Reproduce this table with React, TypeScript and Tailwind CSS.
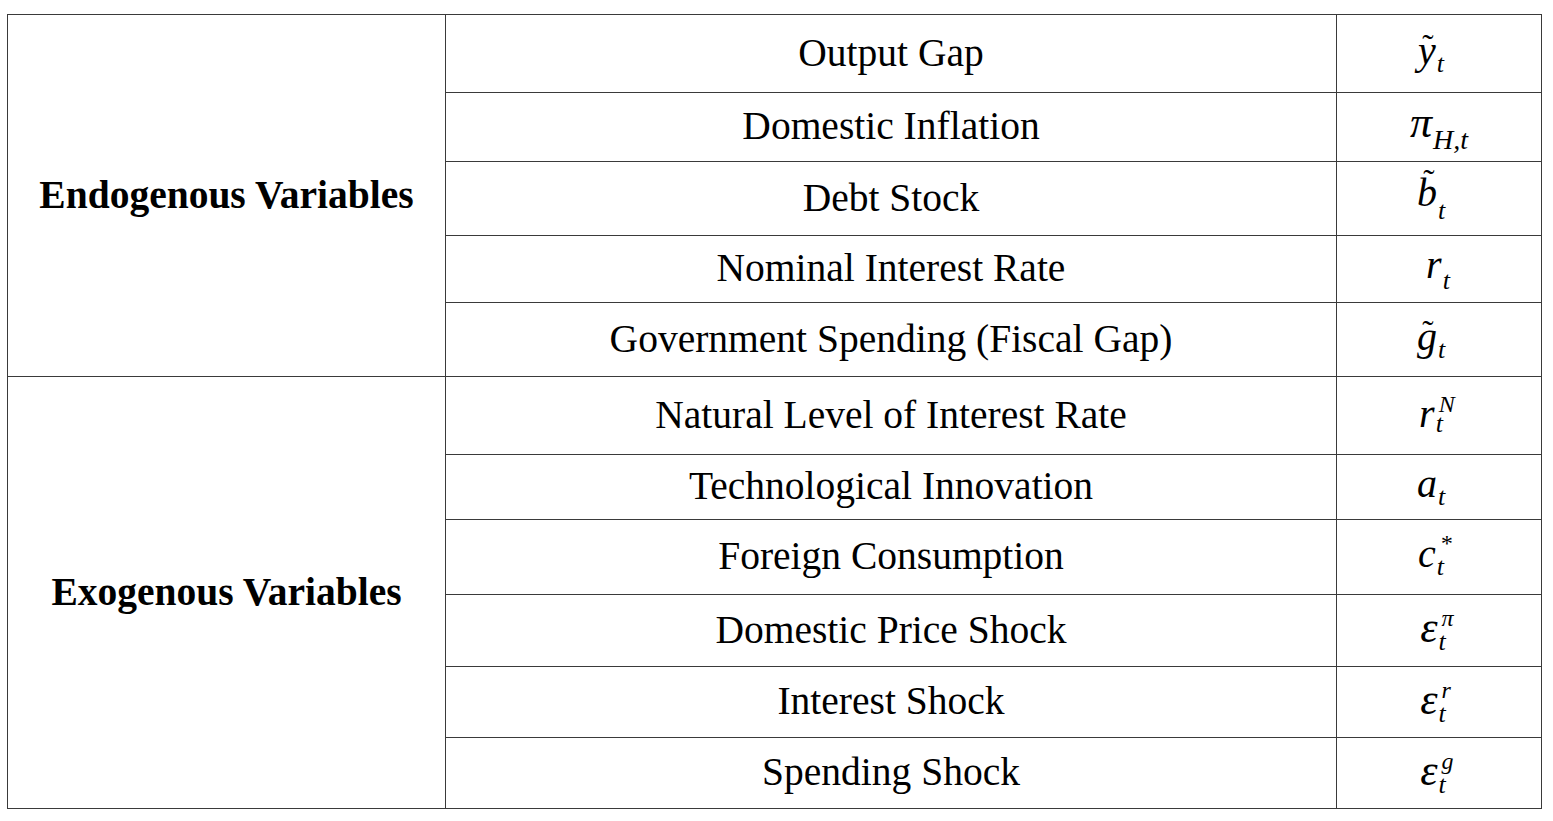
import React from 'react'

type SymProps = {
  base: string
  sub: string
  sup?: string
  tilde?: 'low' | 'high'
  baseClass?: string
  subClass?: string
  supClass?: string
}

// italic maths symbol: base letter, subscript, optional stacked superscript
function Sym({ base, sub, sup, tilde, baseClass, subClass, supClass }: SymProps) {
  return (
    <span className="italic text-[40px] leading-none whitespace-nowrap">
      <span className={`relative ${baseClass ?? ''}`}>
        {base}
        {tilde && (
          <span
            className={
              tilde === 'high'
                ? 'absolute left-[4px] right-0 -top-[5px] text-center text-[34px] not-italic leading-none'
                : 'absolute left-[2px] right-0 top-[2px] text-center text-[34px] not-italic leading-none'
            }
          >
            ˜
          </span>
        )}
      </span>
      <span className={`relative inline-block leading-none ml-[1px] ${subClass ?? 'text-[26px] align-[-8px]'}`}>
        {sub}
        {sup && (
          <span className={`absolute left-[3px] text-[24px] leading-none ${supClass ?? 'bottom-[25px]'}`}>
            {sup}
          </span>
        )}
      </span>
    </span>
  )
}

const rows = [
  { label: 'Output Gap', h: 'h-[78px]', pad: 'pr-[16px]', sym: <Sym base="y" sub="t" tilde="low" /> },
  {
    label: 'Domestic Inflation',
    h: 'h-[69px]',
    pad: 'pr-0',
    sym: <Sym base="π" baseClass="text-[44px]" sub="H,t" subClass="text-[28px] align-[-12px]" />,
  },
  {
    label: 'Debt Stock',
    h: 'h-[74px]',
    pad: 'pr-[16px]',
    sym: <Sym base="b" sub="t" tilde="high" subClass="text-[26px] align-[-13px]" />,
  },
  {
    label: 'Nominal Interest Rate',
    h: 'h-[67px]',
    pad: 'pr-[2px]',
    sym: <Sym base="r" sub="t" subClass="text-[26px] align-[-11px]" />,
  },
  {
    label: 'Government Spending (Fiscal Gap)',
    h: 'h-[74px]',
    pad: 'pr-[16px]',
    sym: <Sym base="g" sub="t" tilde="low" />,
  },
  {
    label: 'Natural Level of Interest Rate',
    h: 'h-[78px]',
    pad: 'pr-[16px]',
    sym: <Sym base="r" sub="t" sup="N" subClass="text-[26px] align-[-5px]" supClass="bottom-[21px]" />,
  },
  { label: 'Technological Innovation', h: 'h-[65px]', pad: 'pr-[16px]', sym: <Sym base="a" sub="t" /> },
  { label: 'Foreign Consumption', h: 'h-[75px]', pad: 'pr-[16px]', sym: <Sym base="c" sub="t" sup="*" /> },
  {
    label: 'Domestic Price Shock',
    h: 'h-[72px]',
    pad: 'pr-[12px]',
    sym: <Sym base="ε" baseClass="text-[44px]" sub="t" sup="π" />,
  },
  {
    label: 'Interest Shock',
    h: 'h-[71px]',
    pad: 'pr-[12px]',
    sym: <Sym base="ε" baseClass="text-[44px]" sub="t" sup="r" />,
  },
  {
    label: 'Spending Shock',
    h: 'h-[71px]',
    pad: 'pr-[12px]',
    sym: <Sym base="ε" baseClass="text-[44px]" sub="t" sup="g" />,
  },
]

const cell = 'border border-[#3a3a3a] text-center align-middle'

export default function App() {
  return (
    <div className="min-h-screen bg-white pt-[14px] pl-[7px] text-black font-['Liberation_Serif','Times_New_Roman',serif]">
      <table className="w-[1535px] border-collapse border border-[#3a3a3a] table-fixed">
        <colgroup>
          <col className="w-[438px]" />
          <col className="w-[891px]" />
          <col className="w-[205px]" />
        </colgroup>
        <tbody>
          {rows.map((row, i) => (
            <tr key={row.label} className={row.h}>
              {i === 0 && (
                <td rowSpan={5} className={`${cell} text-[39.5px] font-bold`}>
                  Endogenous Variables
                </td>
              )}
              {i === 5 && (
                <td rowSpan={6} className={`${cell} text-[39.5px] font-bold`}>
                  Exogenous Variables
                </td>
              )}
              <td className={`${cell} text-[39.5px] leading-none`}>{row.label}</td>
              <td className={`${cell} leading-none ${row.pad}`}>{row.sym}</td>
            </tr>
          ))}
        </tbody>
      </table>
    </div>
  )
}
